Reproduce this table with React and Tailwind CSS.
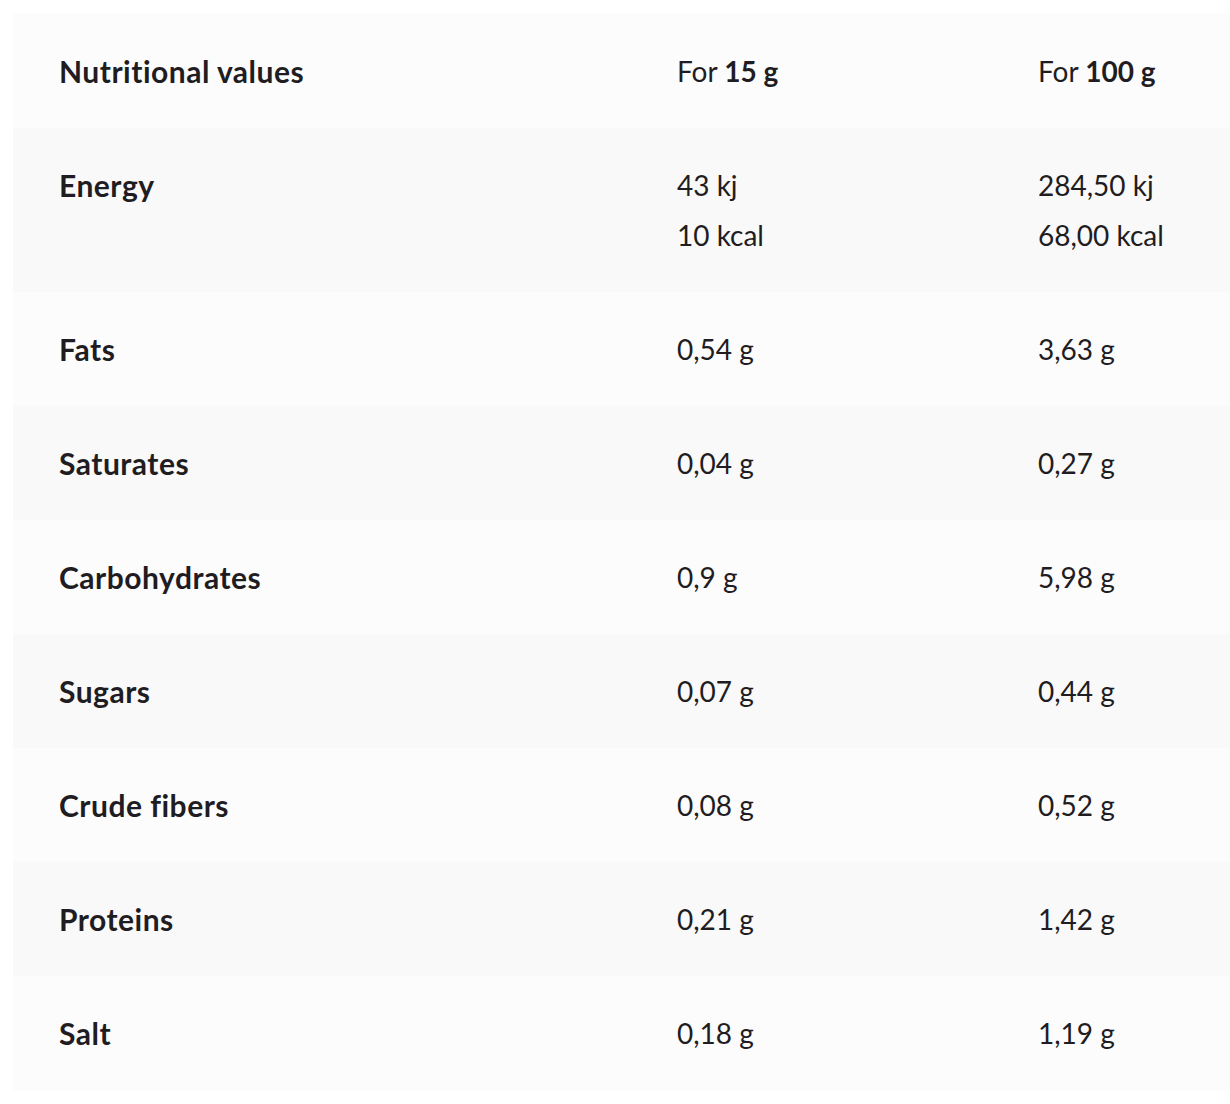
export default function App() {
  const rows = [
    ["Fats", "0,54 g", "3,63 g"],
    ["Saturates", "0,04 g", "0,27 g"],
    ["Carbohydrates", "0,9 g", "5,98 g"],
    ["Sugars", "0,07 g", "0,44 g"],
    ["Crude fibers", "0,08 g", "0,52 g"],
    ["Proteins", "0,21 g", "1,42 g"],
    ["Salt", "0,18 g", "1,19 g"],
  ];
  const label = "w-[618px] font-bold text-[30px] tracking-[0.5px]";
  return (
    <div className="bg-white w-[1230px] h-[1104px] pt-[14px] pl-[13px] text-[#1f1d22] text-[28px] leading-[50px]" style={{ fontFamily: "Lato, sans-serif" }}>
      <div className="flex flex-col">
        <div className="flex items-center h-[114px] pl-[46px] bg-[#fcfcfc]">
          <div className={label}>Nutritional values</div>
          <div className="w-[361px]">For <span className="font-bold">15 g</span></div>
          <div>For <span className="font-bold">100 g</span></div>
        </div>
        <div className="flex py-[32px] pl-[46px] bg-[#f9f9f9]">
          <div className={label}>Energy</div>
          <div className="w-[361px] flex flex-col"><span>43 kj</span><span>10 kcal</span></div>
          <div className="flex flex-col"><span>284,50 kj</span><span>68,00 kcal</span></div>
        </div>
        {rows.map((r, i) => (
          <div key={r[0]} className={i % 2 === 0 ? "flex py-[32px] pl-[46px] bg-[#fcfcfc]" : "flex py-[32px] pl-[46px] bg-[#f9f9f9]"}>
            <div className={label}>{r[0]}</div>
            <div className="w-[361px]">{r[1]}</div>
            <div>{r[2]}</div>
          </div>
        ))}
      </div>
    </div>
  );
}
